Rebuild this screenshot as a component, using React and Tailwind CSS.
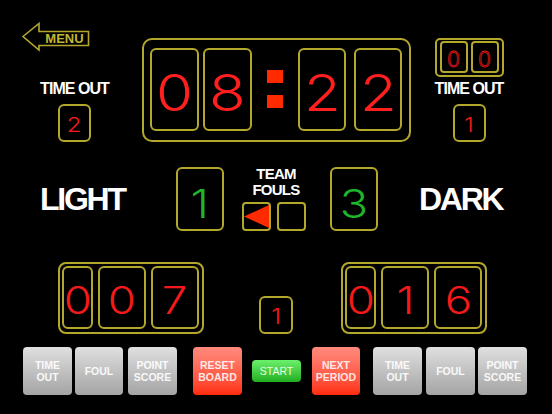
import React from 'react';

const frame = 'border-2 border-[#b4a82c]';
const digitFont = { fontFamily: 'Inter, "DejaVu Sans", sans-serif' };

const Digit = ({ value, className, textClass }) => (
	<div className={`${frame} rounded-[6px] flex items-center justify-center ${className}`}>
		<span className={`inline-block scale-x-[1.2] font-light leading-none ${textClass}`} style={digitFont}>
			{value}
		</span>
	</div>
);

const MenuArrow = () => (
	<svg width="70" height="30" viewBox="20 21 70 30" className="block">
		<polygon
			points="23,35.5 39,22.5 39,30.5 88.5,30.5 88.5,44.5 39,44.5 39,49"
			fill="none"
			stroke="#b4a82c"
			strokeWidth="1.6"
			strokeLinejoin="miter"
		/>
		<text
			x="64.5"
			y="42"
			textAnchor="middle"
			fill="#c2b636"
			fontFamily="'Liberation Sans', Arial, sans-serif"
			fontWeight="bold"
			fontSize="13"
		>
			MENU
		</text>
	</svg>
);

const Label = ({ children, className = '' }) => (
	<div className={`text-white font-bold text-[16px] leading-[16px] tracking-[-0.06em] ${className}`}>{children}</div>
);

const Button = ({ lines, tone = 'gray', className = '' }) => {
	const tones = {
		gray: 'bg-linear-to-b from-[#e0e0e0] to-[#a4a4a4] text-white/90',
		red: 'bg-linear-to-b from-[#ff8a7c] to-[#ff2a08] text-white/85',
		green: 'bg-linear-to-b from-[#6af06a] to-[#1eae1e] text-[#e6ffe0]',
	};
	return (
		<div
			className={`${tones[tone]} rounded-[4px] flex flex-col items-center justify-center font-bold text-[10.5px] leading-[12px] ${className}`}
		>
			{lines.map((line) => (
				<span key={line}>{line}</span>
			))}
		</div>
	);
};

const ScoreFrame = ({ digits, className = '' }) => (
	<div className={`${frame} rounded-[8px] h-[72px] w-[146px] flex gap-[5px] pl-[2px] pt-[2px] ${className}`}>
		<Digit value={digits[0]} className="w-[31px] h-[63px] pt-[4px]" textClass="text-[38px] text-[#f51a1a]" />
		<Digit value={digits[1]} className="w-[48px] h-[63px] pt-[4px]" textClass="text-[38px] text-[#f51a1a]" />
		<Digit value={digits[2]} className="w-[48px] h-[63px] pt-[4px]" textClass="text-[38px] text-[#f51a1a]" />
	</div>
);

const HollowDigit = ({ value }) => (
	<div className={`${frame} rounded-[4px] w-[28px] h-[32px] pt-[4px] flex items-center justify-center`}>
		<span
			className="inline-block leading-none font-light text-[21px] text-transparent [-webkit-text-stroke:0.8px_#e01818]"
			style={digitFont}
		>
			{value}
		</span>
	</div>
);

export default function App() {
	return (
		<div
			className="w-[552px] h-[414px] bg-black overflow-hidden"
			style={{ fontFamily: '"Liberation Sans", Arial, sans-serif' }}
		>
			{/* top row */}
			<div className="flex items-start h-[142px]">
				<div className="w-[142px] pt-[22px]">
					<div className="ml-[20px]">
						<MenuArrow />
					</div>
					<div className="ml-[24px] w-[101px] flex flex-col items-center mt-[29px]">
						<Label>TIME OUT</Label>
						<Digit value="2" className="mt-[7px] w-[33px] h-[38px] pt-[4px]" textClass="text-[20px] text-[#f51a1a]" />
					</div>
				</div>

				<div className={`${frame} rounded-[10px] mt-[38px] w-[269px] h-[104px] flex items-start pl-[6px] pt-[8px]`}>
					<Digit value="0" className="w-[49px] h-[83px] pt-[7px]" textClass="text-[50px] text-[#ff1f1f]" />
					<Digit value="8" className="ml-[4px] w-[49px] h-[83px] pt-[7px]" textClass="text-[50px] text-[#ff1f1f]" />
					<div className="w-[46px] h-[83px] flex flex-col items-center pt-[22px] gap-[12px]">
						<div className="w-[16px] h-[13px] bg-[#ff2a00]" />
						<div className="w-[16px] h-[13px] bg-[#ff2a00]" />
					</div>
					<Digit value="2" className="w-[48px] h-[83px] pt-[7px]" textClass="text-[50px] text-[#ff1f1f]" />
					<Digit value="2" className="ml-[8px] w-[48px] h-[83px] pt-[7px]" textClass="text-[50px] text-[#ff1f1f]" />
				</div>

				<div className="ml-[23px] mt-[38px] w-[70px] flex flex-col items-center">
					<div className={`${frame} rounded-[5px] w-[69px] h-[39px] flex gap-[3px] pl-[3px] pt-[1px]`}>
						<HollowDigit value="0" />
						<HollowDigit value="0" />
					</div>
					<Label className="mt-[4px]">TIME OUT</Label>
					<Digit value="1" className="mt-[7px] w-[33px] h-[38px] pt-[4px]" textClass="text-[20px] text-[#f51a1a]" />
				</div>
			</div>

			{/* middle row */}
			<div className="flex items-start mt-[25px] h-[64px]">
				<div className="w-[176px] h-[64px] pl-[40px] flex items-center">
					<span className="text-white font-bold text-[32px] leading-[32px] tracking-[-0.07em]">LIGHT</span>
				</div>
				<Digit value="1" className="w-[48px] h-[64px] pt-[8px]" textClass="text-[39px] text-[#1fb52a]" />
				<div className="w-[106px] flex flex-col -mt-[1px]">
					<div className="text-white font-bold text-[15px] leading-[16px] tracking-[-0.05em] text-center pr-[2px]">
						<div>TEAM</div>
						<div>FOULS</div>
					</div>
					<div className="flex gap-[6px] pl-[18px] mt-[4px]">
						<div className={`${frame} rounded-[4px] w-[29px] h-[29px] flex items-center justify-end`}>
							<svg width="25" height="25" viewBox="0 0 25 25">
								<polygon points="0,12.5 25,1 25,24" fill="#ff2a00" />
							</svg>
						</div>
						<div className={`${frame} rounded-[4px] w-[29px] h-[29px]`} />
					</div>
				</div>
				<Digit value="3" className="w-[48px] h-[64px] pt-[8px]" textClass="text-[39px] text-[#1fb52a]" />
				<div className="ml-[41px] h-[64px] flex items-center">
					<span className="text-white font-bold text-[32px] leading-[32px] tracking-[-0.07em]">DARK</span>
				</div>
			</div>

			{/* score row */}
			<div className="flex items-end mt-[31px] h-[72px]">
				<ScoreFrame digits={['0', '0', '7']} className="ml-[58px]" />
				<Digit value="1" className="ml-[55px] w-[34px] h-[38px] pt-[3px]" textClass="text-[21px] text-[#f51a1a]" />
				<ScoreFrame digits={['0', '1', '6']} className="ml-[48px]" />
			</div>

			{/* buttons */}
			<div className="flex items-center mt-[13px] h-[48px]">
				<Button lines={['TIME', 'OUT']} className="ml-[23px] w-[49px] h-[48px]" />
				<Button lines={['FOUL']} className="ml-[3px] w-[48px] h-[48px]" />
				<Button lines={['POINT', 'SCORE']} className="ml-[5px] w-[49px] h-[48px]" />
				<Button lines={['RESET', 'BOARD']} tone="red" className="ml-[16px] w-[49px] h-[48px]" />
				<Button lines={['START']} tone="green" className="ml-[10px] w-[49px] h-[22px] rounded-[3px] font-normal" />
				<Button lines={['NEXT', 'PERIOD']} tone="red" className="ml-[11px] w-[48px] h-[48px]" />
				<Button lines={['TIME', 'OUT']} className="ml-[13px] w-[49px] h-[48px]" />
				<Button lines={['FOUL']} className="ml-[4px] w-[49px] h-[48px]" />
				<Button lines={['POINT', 'SCORE']} className="ml-[3px] w-[49px] h-[48px]" />
			</div>
		</div>
	);
}
